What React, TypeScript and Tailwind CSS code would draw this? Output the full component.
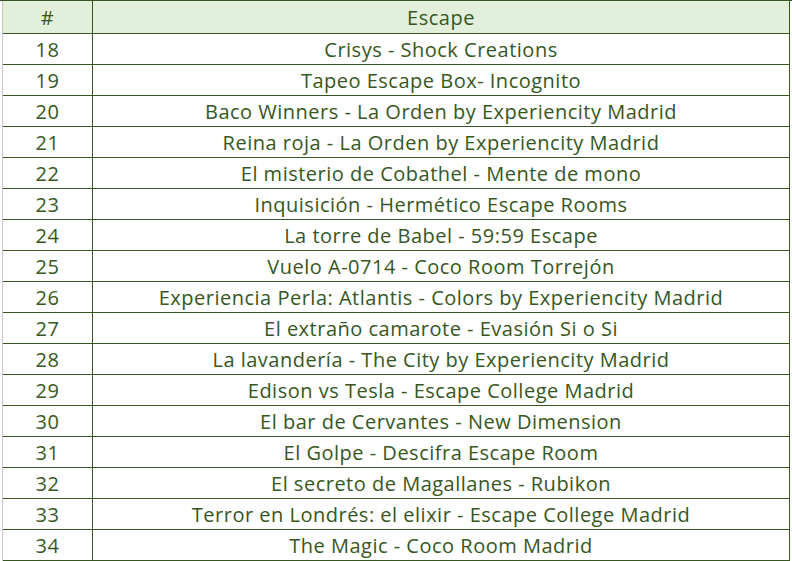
import React from "react";

const rows: [number, string][] = [
  [18, "Crisys - Shock Creations"],
  [19, "Tapeo Escape Box- Incognito"],
  [20, "Baco Winners - La Orden by Experiencity Madrid"],
  [21, "Reina roja - La Orden by Experiencity Madrid"],
  [22, "El misterio de Cobathel - Mente de mono"],
  [23, "Inquisición - Hermético Escape Rooms"],
  [24, "La torre de Babel - 59:59 Escape"],
  [25, "Vuelo A-0714 - Coco Room Torrejón"],
  [26, "Experiencia Perla: Atlantis - Colors by Experiencity Madrid"],
  [27, "El extraño camarote - Evasión Si o Si"],
  [28, "La lavandería - The City by Experiencity Madrid"],
  [29, "Edison vs Tesla - Escape College Madrid"],
  [30, "El bar de Cervantes - New Dimension"],
  [31, "El Golpe - Descifra Escape Room"],
  [32, "El secreto de Magallanes - Rubikon"],
  [33, "Terror en Londrés: el elixir - Escape College Madrid"],
  [34, "The Magic - Coco Room Madrid"],
];

export default function App() {
  return (
    <div
      className="w-[792px] h-[561px] bg-white overflow-hidden text-[#375623] text-[20px] leading-none tracking-[0.5px]"
      style={{ fontFamily: "'Open Sans', 'Liberation Sans', sans-serif" }}
    >
      <div className="h-px bg-[#375623]" />
      <div className="ml-[2px] w-[788px] border-l border-[#c6c6c6]">
        <div className="flex h-[33px] bg-[#e2efda] border-b border-r border-[#375623]">
          <div className="w-[90px] border-r border-[#375623] flex items-center justify-center pt-[2px]">#</div>
          <div className="flex-1 flex items-center justify-center pt-[2px]">Escape</div>
        </div>
        {rows.map(([n, t]) => (
          <div key={n} className="flex h-[31px] border-b border-r border-[#375623]">
            <div className="w-[90px] border-r border-[#375623] flex items-center justify-center pt-[2px]">{n}</div>
            <div className="flex-1 flex items-center justify-center whitespace-nowrap pt-[2px]">{t}</div>
          </div>
        ))}
      </div>
    </div>
  );
}
